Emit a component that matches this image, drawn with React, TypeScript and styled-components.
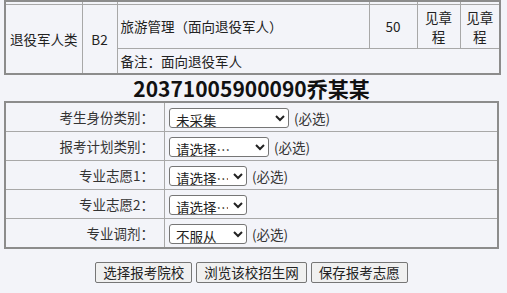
import React from "react";
import styled, { createGlobalStyle } from "styled-components";

const GlobalStyle = createGlobalStyle`
  html, body {
    margin: 0;
    padding: 0;
    background: #f3f4f9;
    font-family: "Noto Sans CJK SC", "Noto Sans", sans-serif;
    color: #222;
  }
`;

const Page = styled.div`
  width: 507px;
  padding-left: 4px;
  box-sizing: border-box;
`;

const Grid = styled.table`
  width: 495px;
  border-collapse: collapse;
  table-layout: fixed;
  border: 2px solid #8c8c8c;
  font-size: 13.5px;
`;

const Cell = styled.td<{ $align?: string; $h?: number }>`
  border: 1px solid #a8a8a8;
  padding: 0 3px;
  text-align: ${(p) => p.$align || "left"};
  height: ${(p) => (p.$h ? `${p.$h}px` : "auto")};
  line-height: 19px;
  vertical-align: middle;
`;

const StubCell = styled.td`
  border: 1px solid #a8a8a8;
  border-top: none;
  padding: 0;
  height: 2px;
  line-height: 0;
`;

const Title = styled.div`
  width: 495px;
  text-align: center;
  font-weight: bold;
  font-size: 21px;
  line-height: 26px;
  color: #111;
`;

const Label = styled.td`
  width: 148px;
  border: 1px solid #a8a8a8;
  text-align: right;
  padding: 0 10px 0 0;
  height: 28px;
  color: #333;
`;

const Field = styled.td`
  border: 1px solid #a8a8a8;
  padding: 0 0 0 4px;
  color: #333;
`;

const Select = styled.select<{ $w: number }>`
  width: ${(p) => p.$w}px;
  height: 20px;
  font-family: inherit;
  font-size: 13.5px;
  color: #222;
  background: #fff;
  border: 1px solid #767676;
  border-radius: 3px;
  padding: 0 2px;
  margin: 0 2px 0 0;
  vertical-align: middle;
`;

const Hint = styled.span`
  font-size: 13.5px;
  vertical-align: middle;
`;

const Actions = styled.div`
  width: 495px;
  display: flex;
  justify-content: center;
  gap: 4px;
  margin-top: 13px;
`;

const Button = styled.button`
  height: 21px;
  padding: 0 7px;
  font-family: inherit;
  font-size: 13.5px;
  color: #222;
  background: #f0f0f0;
  border: 1px solid #767676;
  border-radius: 2px;
  line-height: 19px;
`;

const rows = [
  { label: "考生身份类别：", w: 120, value: "未采集", req: true },
  { label: "报考计划类别：", w: 100, value: "请选择…", req: true },
  { label: "专业志愿1：", w: 78, value: "请选择…", req: true },
  { label: "专业志愿2：", w: 78, value: "请选择…", req: false },
  { label: "专业调剂：", w: 78, value: "不服从", req: true },
];

export default function App() {
  return (
    <Page>
      <GlobalStyle />
      <Grid>
        <colgroup>
          <col style={{ width: 77 }} />
          <col style={{ width: 35 }} />
          <col style={{ width: 252 }} />
          <col style={{ width: 48 }} />
          <col style={{ width: 43 }} />
          <col style={{ width: 40 }} />
        </colgroup>
        <tbody>
          <tr>
            <StubCell />
            <StubCell />
            <StubCell />
            <StubCell />
            <StubCell />
            <StubCell />
          </tr>
          <tr>
            <Cell rowSpan={2} $align="center">退役军人类</Cell>
            <Cell rowSpan={2} $align="center">B2</Cell>
            <Cell $h={43}>旅游管理（面向退役军人）</Cell>
            <Cell $align="center">50</Cell>
            <Cell $align="center">见章程</Cell>
            <Cell $align="center">见章程</Cell>
          </tr>
          <tr>
            <Cell colSpan={4} $h={24}>备注：面向退役军人</Cell>
          </tr>
        </tbody>
      </Grid>
      <Title>20371005900090乔某某</Title>
      <Grid>
        <tbody>
          {rows.map((r) => (
            <tr key={r.label}>
              <Label>{r.label}</Label>
              <Field>
                <Select $w={r.w} defaultValue={r.value}>
                  <option>{r.value}</option>
                </Select>
                {r.req && <Hint> (必选)</Hint>}
              </Field>
            </tr>
          ))}
        </tbody>
      </Grid>
      <Actions>
        <Button>选择报考院校</Button>
        <Button>浏览该校招生网</Button>
        <Button>保存报考志愿</Button>
      </Actions>
    </Page>
  );
}
